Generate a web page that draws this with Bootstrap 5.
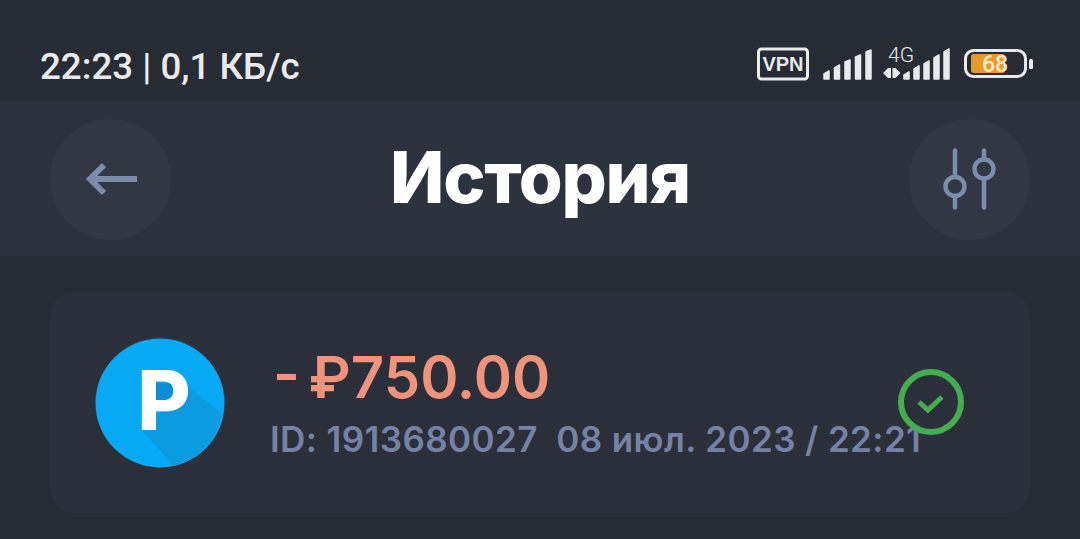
<!DOCTYPE html>
<html lang="ru">
  <head>
    <meta charset="UTF-8" />
    <meta name="viewport" content="width=device-width, initial-scale=1.0" />
    <title>История</title>
    <link href="https://cdn.jsdelivr.net/npm/bootstrap@5.3.0/dist/css/bootstrap.min.css" rel="stylesheet" />
    <style>
      body {
        background: #272b34;
        font-family: Inter, "Noto Sans", sans-serif;
        height: 539px;
        overflow: hidden;
      }

      .status-bar {
        height: 102px;
        padding: 0 47px 0 40px;
        color: #e9eaec;
      }

      .status-text {
        font-family: Roboto, sans-serif;
        font-size: 36.7px;
        font-weight: 500;
        line-height: 1;
        margin-top: 49px;
      }

      .status-icons {
        margin-top: 39px;
      }

      .top-bar {
        height: 154px;
        padding: 0 50px;
        background: #2d333d;
      }

      .round-btn {
        width: 121px;
        height: 121px;
        border-radius: 50%;
        background: #313743;
      }

      .page-title {
        font-size: 71px;
        font-weight: 800;
        letter-spacing: -1.2px;
        color: #fff;
        line-height: 1;
        padding-bottom: 4px;
      }

      .pay-card {
        height: 221px;
        margin: 36px 50px 0;
        padding: 0 45px;
        border-radius: 24px;
        background: #2b2f39;
      }

      .pay-amount {
        font-size: 58px;
        font-weight: 600;
        word-spacing: -6px;
        line-height: 1;
        color: #f0937d;
        margin-left: 3px;
      }

      .pay-meta {
        font-size: 35px;
        font-weight: 600;
        letter-spacing: 0.4px;
        line-height: 1;
        color: #7483a3;
        white-space: nowrap;
        margin-top: 16px;
      }

      .pay-info {
        margin-left: 45px;
      }

      .pay-check {
        position: absolute;
        left: 848px;
        top: 77px;
      }
    </style>
  </head>
  <body>
    <!-- status bar -->
    <div class="status-bar d-flex justify-content-between align-items-start">
      <div class="status-text">22:23 | 0,1 КБ/с</div>
      <svg class="status-icons" width="276" height="42" viewBox="0 -8 276 42">
        <rect x="1.500" y="2" width="49" height="30" rx="3" fill="none" stroke="#e9eaec" stroke-width="3" />
        <text x="26" y="24" text-anchor="middle" font-family="Liberation Sans" font-weight="700" font-size="20" fill="#e9eaec">VPN</text>
        <g fill="#e9eaec" stroke="#e9eaec" stroke-width="1.500" stroke-linejoin="round">
          <path d="M67 32v-5l5-3v8z" />
          <path d="M77.500 32v-11l5-3v14z" />
          <path d="M88 32v-17l5-2v19z" />
          <path d="M98.500 32v-22l5-2v24z" />
          <path d="M109 32v-27l5-2v29z" />
          <path d="M147 32v-4l5-3v7z" />
          <path d="M157 32v-10l5-3v13z" />
          <path d="M167 32v-15l5-3v18z" />
          <path d="M177 32v-21l5-3v24z" />
          <path d="M187 32v-27l5-3v30z" />
        </g>
        <path d="M126 26l5-5v10zM131 21h3v10h-3zM135.500 21h3v10h-3zM138.500 21l5 5-5 5z" fill="#e9eaec" />
        <text x="131" y="15" font-family="Roboto" font-weight="300" font-size="21" fill="#e9eaec">4G</text>
        <rect x="214" y="7" width="34" height="19" rx="3" fill="#e39b2e" />
        <rect x="208.500" y="3.500" width="60" height="26" rx="8" fill="none" stroke="#e9eaec" stroke-width="3" />
        <rect x="272" y="12" width="4" height="10" rx="1.500" fill="#e9eaec" />
        <text x="238" y="25" text-anchor="middle" font-family="Roboto" font-weight="500" font-size="23" fill="#f8e9c6">68</text>
      </svg>
    </div>

    <!-- top bar -->
    <div class="top-bar d-flex justify-content-between align-items-center">
      <div class="round-btn d-flex justify-content-center align-items-center">
        <svg width="52" height="34" viewBox="0 0 52 34" fill="none" stroke="#7c8cab" stroke-width="6">
          <path d="M52 17H5M19 3L5 17l14 14" />
        </svg>
      </div>
      <div class="page-title">История</div>
      <div class="round-btn d-flex justify-content-center align-items-center">
        <svg width="54" height="62" viewBox="0 0 54 62" fill="none" stroke="#7c8cab" stroke-width="4.500" stroke-linecap="round">
          <path d="M12 2.500V29M12 48v11.500M41 2.500V11M41 31v28.500" />
          <circle cx="12" cy="38.500" r="9.500" />
          <circle cx="41" cy="21" r="9.500" />
        </svg>
      </div>
    </div>

    <!-- payment -->
    <div class="pay-card d-flex align-items-center position-relative">
      <svg width="130" height="130" viewBox="0 0 130 130" class="flex-shrink-0">
        <circle cx="65" cy="65" r="64.500" fill="#08a9f4" />
        <path d="M47 92L78 128A65 65 0 0 0 127 76L92 48z" fill="#0a9be0" />
        <rect x="60" y="45" width="19" height="17" fill="#0a8fd6" />
        <text x="69" y="92" text-anchor="middle" font-family="Inter" font-weight="800" font-size="82" fill="#fff">P</text>
      </svg>
      <div class="pay-info">
        <div class="pay-amount">- ₽750.00</div>
        <div class="pay-meta">ID: 1913680027&nbsp; 08 июл. 2023 / 22:21</div>
      </div>
      <svg class="pay-check" width="66" height="66" viewBox="0 0 66 66" fill="none" stroke="#43ad50">
        <circle cx="33" cy="33" r="30" stroke-width="6" />
        <path d="M21 33l9 8 14-13" stroke-width="5" />
      </svg>
    </div>

    <script src="https://cdn.jsdelivr.net/npm/bootstrap@5.3.0/dist/js/bootstrap.bundle.min.js"></script>
  </body>
</html>
